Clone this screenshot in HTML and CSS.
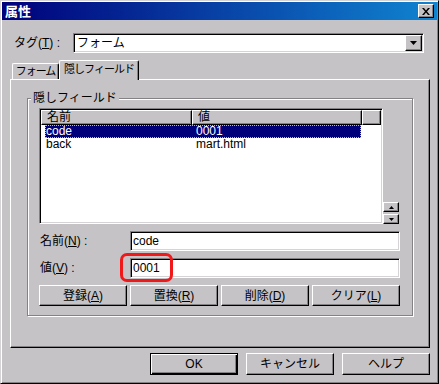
FILE: index.html
```html
<!DOCTYPE html>
<html lang="ja">
<head>
  <meta charset="UTF-8" />
  <title>属性</title>
  <link rel="stylesheet" href="styles.css">
</head>
<body>
  <div class="window">
    <div class="titlebar">
      <span class="title">属性</span>
      <button class="close-btn">
        <svg width="8" height="7" viewBox="0 0 8 7"><path d="M0 0h2l2 2.5 2-2.5h2l-3 3.5 3 3.5h-2l-2-2.5-2 2.5h-2l3-3.5z" fill="#000"/></svg>
      </button>
    </div>

    <div class="content">
      <div class="tag-row">
        <span class="tag-label">タグ(<u>T</u>) :</span>
        <div class="combo">
          <span>フォーム</span>
          <span class="combo-btn"><svg width="7" height="4" viewBox="0 0 7 4"><path d="M0 0h7l-3.5 4z" fill="#000"/></svg></span>
        </div>
      </div>

      <div class="tabs">
        <div class="tab">フォーム</div>
        <div class="tab active">隠しフィールド</div>
      </div>

      <div class="panel">
        <div class="group">
          <span class="group-title">隠しフィールド</span>

          <div class="list-row">
            <div class="listview">
              <div class="list-header">
                <span class="col-head name">名前</span>
                <span class="col-head value">値</span>
                <span class="col-head filler"></span>
              </div>
              <div class="list-item selected">
                <span class="cell name">code</span>
                <span class="cell value">0001</span>
              </div>
              <div class="list-item">
                <span class="cell name">back</span>
                <span class="cell value">mart.html</span>
              </div>
            </div>
            <div class="spin">
              <span class="spin-btn"><svg width="5" height="3" viewBox="0 0 5 3"><path d="M2.5 0l2.5 3h-5z" fill="#000"/></svg></span>
              <span class="spin-btn"><svg width="5" height="3" viewBox="0 0 5 3"><path d="M0 0h5l-2.5 3z" fill="#000"/></svg></span>
            </div>
          </div>

          <div class="field-row">
            <span class="field-label">名前(<u>N</u>) :</span>
            <div class="textbox">code</div>
          </div>
          <div class="field-row">
            <span class="field-label">値(<u>V</u>) :</span>
            <div class="textbox">0001</div>
          </div>

          <div class="btn-row">
            <button class="btn">登録(<u>A</u>)</button>
            <button class="btn">置換(<u>R</u>)</button>
            <button class="btn">削除(<u>D</u>)</button>
            <button class="btn">クリア(<u>L</u>)</button>
          </div>
        </div>
      </div>

      <div class="footer">
        <button class="btn wide default">OK</button>
        <button class="btn wide">キャンセル</button>
        <button class="btn wide">ヘルプ</button>
      </div>
    </div>

    <!-- annotation around the value field -->
    <div class="highlight"></div>
  </div>
</body>
</html>
```

FILE: styles.css
```css
* {
  box-sizing: border-box;
}

body {
  margin: 0;
  background: #c6c3c6;
  font: 12px/14px "Liberation Sans", "Noto Sans CJK JP", sans-serif;
  color: #000;
}

u {
  text-underline-offset: 1px;
}

.window {
  position: relative;
  width: 439px;
  height: 384px;
  padding: 1px;
  background: #c6c3c6;
  border: 1px solid;
  border-color: #d6d3d6 #000 #000 #d6d3d6;
  box-shadow: inset 1px 1px #fff, inset -1px -1px #848284;
  display: flex;
  flex-direction: column;
}

.titlebar {
  height: 18px;
  padding: 0 3px 0 3px;
  background: linear-gradient(to right, #00007b, #1084d0);
  color: #fff;
  font-weight: bold;
  display: flex;
  align-items: center;
  justify-content: space-between;
}

.title {
  font-family: "Noto Sans CJK JP", sans-serif;
  font-size: 13px;
}

.close-btn {
  width: 16px;
  height: 14px;
  padding: 0;
  background: #c6c3c6;
  border: 1px solid;
  border-color: #fff #000 #000 #fff;
  box-shadow: inset -1px -1px #848284;
  display: flex;
  align-items: center;
  justify-content: center;
}

.content {
  flex: 1;
  padding: 0 7px 0 8px;
  display: flex;
  flex-direction: column;
}

/* sunken field look */
.combo, .textbox, .listview {
  background: #fff;
  border: 1px solid;
  border-color: #848284 #fff #fff #848284;
  box-shadow: inset 1px 1px #000, inset -1px -1px #d6d3d6;
  padding: 1px;
}

/* raised look */
.btn, .spin-btn, .combo-btn, .col-head {
  background: #c6c3c6;
  border: 1px solid;
  border-color: #fff #000 #000 #fff;
  box-shadow: inset -1px -1px #848284;
}

.tag-row {
  margin-top: 13px;
  padding-left: 4px;
  display: flex;
  align-items: center;
}

.tag-label {
  width: 59px;
}

.combo {
  width: 351px;
  height: 20px;
  display: flex;
  align-items: center;
  justify-content: space-between;
  padding-left: 3px;
}

.combo-btn {
  width: 17px;
  height: 16px;
  display: flex;
  align-items: center;
  justify-content: center;
}

.tabs {
  margin-top: 7px;
  height: 19px;
  padding-left: 2px;
  display: flex;
  align-items: flex-end;
}

.tab {
  width: 47px;
  height: 16px;
  font-size: 11px;
  letter-spacing: -1px;
  white-space: nowrap;
  text-align: center;
  line-height: 15px;
  border: 1px solid #fff;
  border-right-color: #000;
  border-bottom: none;
  border-radius: 2px 2px 0 0;
  box-shadow: inset -1px 0 #848284;
}

.tab.active {
  position: relative;
  z-index: 1;
  width: 80px;
  height: 20px;
  margin-bottom: -1px;
  line-height: 17px;
  background: #c6c3c6;
}

.panel {
  height: 269px;
  border: 1px solid;
  border-color: #fff #000 #000 #fff;
  box-shadow: inset -1px -1px #848284;
}

.group {
  margin: 18px 0 0 16px;
  width: 386px;
  height: 218px;
  padding-left: 11px;
  border: 1px solid #848284;
  box-shadow: inset 1px 1px #fff, 1px 1px #fff;
  display: flex;
  flex-direction: column;
}

.group-title {
  align-self: flex-start;
  height: 14px;
  margin: -8px 0 0 -8px;
  padding: 0 2px;
  background: #c6c3c6;
}

.list-row {
  margin-top: 3px;
  display: flex;
  align-items: flex-end;
}

.listview {
  width: 344px;
  height: 116px;
}

.list-header {
  height: 15px;
  display: flex;
}

.col-head {
  height: 15px;
  padding-left: 5px;
  line-height: 13px;
}

.col-head.name { width: 151px; }
.col-head.value { width: 170px; }
.col-head.filler { flex: 1; }

.list-item {
  width: 316px;
  height: 13px;
  margin-left: 4px;
  display: flex;
  line-height: 13px;
}

.list-item.selected {
  background: #00007b;
  color: #fff;
  outline: 1px dotted #d6d300;
  outline-offset: -1px;
}

.cell.name {
  width: 147px;
  padding-left: 1px;
}

.cell.value {
  padding-left: 4px;
}

.spin {
  display: flex;
  flex-direction: column;
  gap: 2px;
}

.spin-btn {
  width: 16px;
  height: 10px;
  display: flex;
  align-items: center;
  justify-content: center;
}

.field-row {
  margin-top: 7px;
  display: flex;
  align-items: center;
}

.field-label {
  width: 91px;
  padding-left: 1px;
}

.textbox {
  width: 270px;
  height: 20px;
  padding: 2px 2px 0;
  line-height: 15px;
}

.btn-row {
  margin-top: 7px;
  display: flex;
  gap: 3px;
}

.btn {
  width: 88px;
  height: 21px;
  padding: 0;
  font: inherit;
  color: #000;
  text-align: center;
}

.footer {
  margin-top: 5px;
  display: flex;
  justify-content: flex-end;
  gap: 8px;
}

.btn.wide {
  height: 22px;
}

.btn.default {
  border-color: #000;
  box-shadow: inset 1px 1px #fff, inset -1px -1px #000, inset -2px -2px #848284;
}

.highlight {
  position: absolute;
  left: 119px;
  top: 252px;
  width: 53px;
  height: 29px;
  border: 3px solid #f01818;
  border-radius: 7px;
}
```
